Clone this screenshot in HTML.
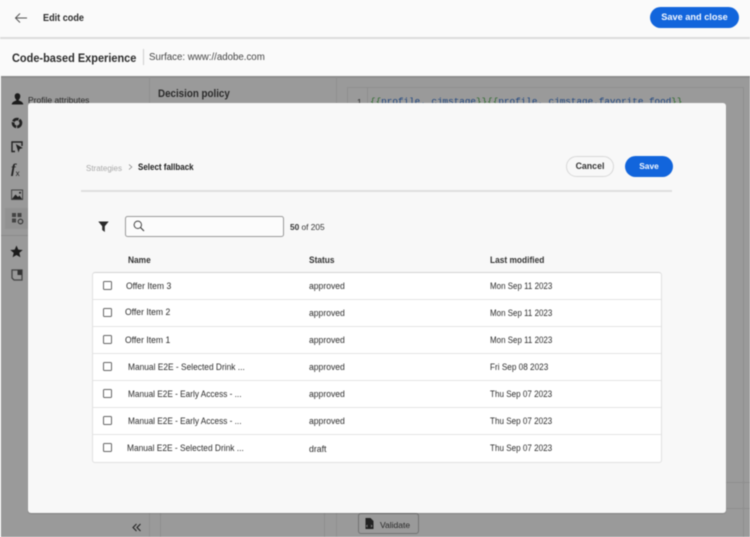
<!DOCTYPE html>
<html><head><meta charset="utf-8"><style>
html,body{margin:0;padding:0;width:750px;height:537px;overflow:hidden;background:#fafafa}
body{font-family:"Liberation Sans",sans-serif;position:relative;color:#2c2c2c}
#w{position:absolute;left:0;top:0;width:750px;height:537px;overflow:hidden;filter:blur(.4px)}
.a,.t{position:absolute;white-space:nowrap}
.t{line-height:12px;font-size:9px;transform-origin:0 50%}
.b{font-weight:bold}
.l{position:absolute;background:#e3e3e3}
.cb{position:absolute;left:103px;width:7px;height:7px;border:1.200px solid #666;border-radius:1.500px;background:#fff;box-sizing:content-box}
svg{position:absolute;overflow:visible}
</style></head><body><div id="w">
<div class="a" style="left:0;top:0;width:750px;height:37px;background:#fafafa"></div>
<div class="a" style="left:0;top:37px;width:750px;height:1.500px;background:#dcdcdc"></div>
<svg style="left:14px;top:12px" width="14" height="12" viewBox="0 0 14 12"><path d="M13 6H1.500M6 1.500L1.500 6L6 10.500" fill="none" stroke="#555" stroke-width="1"/></svg>
<div class="t b" style="left:43px;top:12.500px;font-size:9.800px;transform:scaleX(.93)">Edit code</div>
<div class="a" style="left:650px;top:7px;width:89px;height:21px;border-radius:11px;background:#1265dc;color:#f4f8ff;font-size:9.200px;font-weight:bold;line-height:20px;text-align:center">Save and close</div>
<div class="t b" style="left:12px;top:51.500px;font-size:11.800px;transform:scaleX(.93)">Code-based Experience</div>
<div class="a" style="left:143px;top:49px;width:1px;height:16px;background:#d0d0d0"></div>
<div class="t" style="left:149px;top:51.500px;font-size:9.700px;color:#444">Surface: www://adobe.com</div>

<div class="a" style="left:1px;top:76px;width:749px;height:461px;background:#9a9a9a"></div>
<div class="a" style="left:1px;top:76px;width:749px;height:1.500px;background:#8d8d8d"></div>
<div class="a" style="left:149px;top:77px;width:1px;height:460px;background:#909090"></div>
<div class="a" style="left:160px;top:513px;width:1px;height:24px;background:#8e8e8e"></div>
<div class="a" style="left:324px;top:513px;width:1px;height:24px;background:#8e8e8e"></div>
<div class="a" style="left:336px;top:77px;width:1px;height:460px;background:#909090"></div>
<div class="a" style="left:347px;top:87px;width:1px;height:20px;background:#8e8e8e"></div>
<div class="a" style="left:347px;top:87px;width:396px;height:1px;background:#909090"></div>
<div class="a" style="left:367px;top:87px;width:1px;height:20px;background:#8e8e8e"></div>
<div class="a" style="left:726px;top:482px;width:24px;height:1px;background:#8e8e8e"></div>
<div class="a" style="left:726px;top:508px;width:24px;height:1px;background:#8e8e8e"></div>
<div class="a" style="left:743px;top:87px;width:1px;height:450px;background:#8e8e8e"></div>
<div class="a" style="left:5px;top:208px;width:23px;height:21px;background:#929292"></div>
<div class="a" style="left:1px;top:235px;width:27px;height:1px;background:#8a8a8a"></div>

<div class="t" style="left:28px;top:94px;font-size:8.500px;color:#2a2a2a">Profile attributes</div>
<div class="t b" style="left:158px;top:87.500px;font-size:11px;color:#2a2a2a;transform:scaleX(.89)">Decision policy</div>
<div class="t" style="left:357px;top:96px;font-size:8.500px;color:#333">1</div>
<div class="t" style="left:370px;top:96px;font-family:'Liberation Mono',monospace;font-size:9.300px;color:#1f4680"><span style="color:#2c6a2c">{{</span>profile._cjmstage<span style="color:#2c6a2c">}}{{</span>profile._cjmstage.favorite_food<span style="color:#2c6a2c">}}</span></div>

<!-- sidebar icons -->
<svg style="left:10.500px;top:93px" width="13" height="12" viewBox="0 0 13 12"><path d="M6.500.3C8.300.3 9.300 1.500 9.300 3.200C9.300 4.800 8.500 6 7.800 6.600V7.500C9.500 8 12 9 12.300 11.500H.7C1 9 3.500 8 5.200 7.500V6.600C4.500 6 3.700 4.800 3.700 3.200C3.700 1.500 4.700.3 6.500.3z" fill="#1c1c1c"/></svg>
<svg style="left:11px;top:117px" width="12" height="12" viewBox="0 0 12 12"><circle cx="6" cy="6" r="3.900" fill="none" stroke="#222" stroke-width="2.800" stroke-dasharray="6 .9"/></svg>
<svg style="left:11px;top:141px" width="12" height="12" viewBox="0 0 12 12"><path d="M4 10.500H1V1h10v4" fill="none" stroke="#222" stroke-width="1.400"/><path d="M4.800 3L11.800 7L8.700 8L7.500 11.500z" fill="#222"/></svg>
<div class="t" style="left:11px;top:164px;font-family:'Liberation Serif',serif;font-style:italic;font-weight:bold;font-size:14px;color:#222">f<span style="font-family:'Liberation Sans',sans-serif;font-style:normal;font-weight:normal;font-size:8px;position:relative;top:3px">x</span></div>
<svg style="left:11px;top:189px" width="12" height="12" viewBox="0 0 12 12"><rect x=".6" y="1" width="11" height="9.500" fill="none" stroke="#444" stroke-width="1"/><path d="M1 10L4.500 5.500L7 8L8.500 6.500L11 10z" fill="#222"/><circle cx="9" cy="3.800" r="1" fill="#222"/></svg>
<svg style="left:11px;top:212px" width="13" height="13" viewBox="0 0 13 13"><path d="M1 1h4v4H1zM6.500 1h4v4h-4zM1 6.500h4v4H1z" fill="#444"/><circle cx="9.500" cy="9.500" r="2.300" fill="#929292" stroke="#333" stroke-width="1.100"/></svg>
<svg style="left:10px;top:245px" width="13" height="13" viewBox="0 0 13 13"><path d="M6.500.5L8.300 4.600L12.700 5L9.300 7.900L10.400 12.300L6.500 10L2.600 12.300L3.700 7.900L.3 5L4.700 4.600z" fill="#1c1c1c"/></svg>
<svg style="left:11px;top:269px" width="12" height="12" viewBox="0 0 12 12"><path d="M1 1h10v10H3L1 9z" fill="none" stroke="#444" stroke-width="1.300"/><path d="M6.500 1h4.500v5H6.500z" fill="#333"/></svg>

<svg style="left:132px;top:523px" width="9" height="9" viewBox="0 0 9 9"><path d="M4.500 1L1 4.500L4.500 8M8.500 1L5 4.500L8.500 8" fill="none" stroke="#222" stroke-width="1.100"/></svg>

<div class="a" style="left:358px;top:513px;width:61px;height:21px;border:1px solid #727272;border-radius:3px;box-sizing:border-box"></div>
<svg style="left:365px;top:518px" width="9" height="11" viewBox="0 0 9 11"><path d="M.5 0H5.500L8.500 3V11H.5z" fill="#222"/><path d="M2.500 7L1.500 8L2.500 9M6 7L7 8L6 9" fill="none" stroke="#9a9a9a" stroke-width=".7"/></svg>
<div class="t" style="left:380px;top:518.500px;font-size:8.500px;color:#2a2a2a">Validate</div>

<!-- modal -->
<div class="a" style="left:28px;top:103px;width:698px;height:410px;background:#f8f8f8;border-radius:3px;box-shadow:0 1px 1px rgba(0,0,0,.15)"></div>
<div class="t" style="left:86px;top:161.500px;font-size:8.600px;color:#a9a9a9;transform:scaleX(.93)">Strategies</div>
<svg style="left:128px;top:164px" width="5" height="6" viewBox="0 0 5 6"><path d="M1 .5L3.800 3L1 5.500" fill="none" stroke="#888" stroke-width=".8"/></svg>
<div class="t b" style="left:138px;top:161px;font-size:8.800px;color:#1c1c1c;transform:scaleX(.91)">Select fallback</div>
<div class="a" style="left:566px;top:156px;width:48px;height:21px;border:1.500px solid #d8d8d8;border-radius:11px;box-sizing:border-box;font-size:8.800px;font-weight:bold;line-height:18px;text-align:center;color:#333">Cancel</div>
<div class="a" style="left:625px;top:156px;width:48px;height:21px;background:#1265dc;border-radius:11px;font-size:8.400px;font-weight:bold;line-height:20.500px;text-align:center;color:#f4f8ff">Save</div>
<div class="a" style="left:81px;top:190px;width:591px;height:1.500px;background:#dfdfdf"></div>

<svg style="left:98px;top:221px" width="11" height="11" viewBox="0 0 11 11"><path d="M.3.500H10.700L6.800 5.300V11L4.200 9V5.300z" fill="#2a2a2a"/></svg>
<div class="a" style="left:125px;top:216px;width:159px;height:21px;background:#fcfcfc;border:1px solid #9a9a9a;border-radius:2.500px;box-sizing:border-box"></div>
<svg style="left:133px;top:220px" width="12" height="12" viewBox="0 0 12 12"><circle cx="4.800" cy="4.800" r="3.700" fill="none" stroke="#444" stroke-width="1"/><path d="M7.500 7.500L11 11" stroke="#444" stroke-width="1.200"/></svg>
<div class="t" style="left:290px;top:221px;font-size:8.300px;color:#333"><b>50</b> of 205</div>

<div class="t b" style="left:128px;top:254px;font-size:8.800px;color:#333;transform:scaleX(.95)">Name</div>
<div class="t b" style="left:309px;top:254px;font-size:8.800px;color:#333;transform:scaleX(.95)">Status</div>
<div class="t b" style="left:490px;top:254px;font-size:8.800px;color:#333;transform:scaleX(.95)">Last modified</div>

<div class="a" style="left:91.500px;top:271.500px;width:570px;height:191px;background:#fff;border:1px solid #e0e0e0;border-top-color:#d4d4d4;border-radius:3px;box-sizing:border-box"></div>
<div class="l" style="left:92px;top:299px;width:569px;height:1px"></div>
<div class="l" style="left:92px;top:326px;width:569px;height:1px"></div>
<div class="l" style="left:92px;top:353px;width:569px;height:1px"></div>
<div class="l" style="left:92px;top:380px;width:569px;height:1px"></div>
<div class="l" style="left:92px;top:407px;width:569px;height:1px"></div>
<div class="l" style="left:92px;top:434px;width:569px;height:1px"></div>

<div class="cb" style="top:281.300px"></div>
<div class="cb" style="top:308.300px"></div>
<div class="cb" style="top:335.300px"></div>
<div class="cb" style="top:362.300px"></div>
<div class="cb" style="top:389.300px"></div>
<div class="cb" style="top:416.300px"></div>
<div class="cb" style="top:443.300px"></div>

<div class="t" style="left:126px;top:280px;transform:scaleX(.955)">Offer Item 3</div>
<div class="t" style="left:124.500px;top:306px;transform:scaleX(.955)">Offer Item 2</div>
<div class="t" style="left:125px;top:334px;transform:scaleX(.955)">Offer Item 1</div>
<div class="t" style="left:128px;top:361px;transform:scaleX(.93)">Manual E2E - Selected Drink ...</div>
<div class="t" style="left:128px;top:388px;transform:scaleX(.915)">Manual E2E - Early Access - ...</div>
<div class="t" style="left:128px;top:415px;transform:scaleX(.915)">Manual E2E - Early Access - ...</div>
<div class="t" style="left:126.500px;top:442px;transform:scaleX(.93)">Manual E2E - Selected Drink ...</div>

<div class="t" style="left:309px;top:280px;transform:scaleX(.955)">approved</div>
<div class="t" style="left:309px;top:307px;transform:scaleX(.955)">approved</div>
<div class="t" style="left:309px;top:334px;transform:scaleX(.955)">approved</div>
<div class="t" style="left:309px;top:361px;transform:scaleX(.955)">approved</div>
<div class="t" style="left:309px;top:388px;transform:scaleX(.955)">approved</div>
<div class="t" style="left:309px;top:415px;transform:scaleX(.955)">approved</div>
<div class="t" style="left:309px;top:442.500px;transform:scaleX(.97)">draft</div>

<div class="t" style="left:490px;top:280px;transform:scaleX(.885)">Mon Sep 11 2023</div>
<div class="t" style="left:490px;top:307px;transform:scaleX(.885)">Mon Sep 11 2023</div>
<div class="t" style="left:490px;top:334px;transform:scaleX(.885)">Mon Sep 11 2023</div>
<div class="t" style="left:490px;top:361px;transform:scaleX(.91)">Fri Sep 08 2023</div>
<div class="t" style="left:490px;top:388px;transform:scaleX(.9)">Thu Sep 07 2023</div>
<div class="t" style="left:490px;top:415px;transform:scaleX(.9)">Thu Sep 07 2023</div>
<div class="t" style="left:490px;top:442px;transform:scaleX(.9)">Thu Sep 07 2023</div>
</div></body></html>
